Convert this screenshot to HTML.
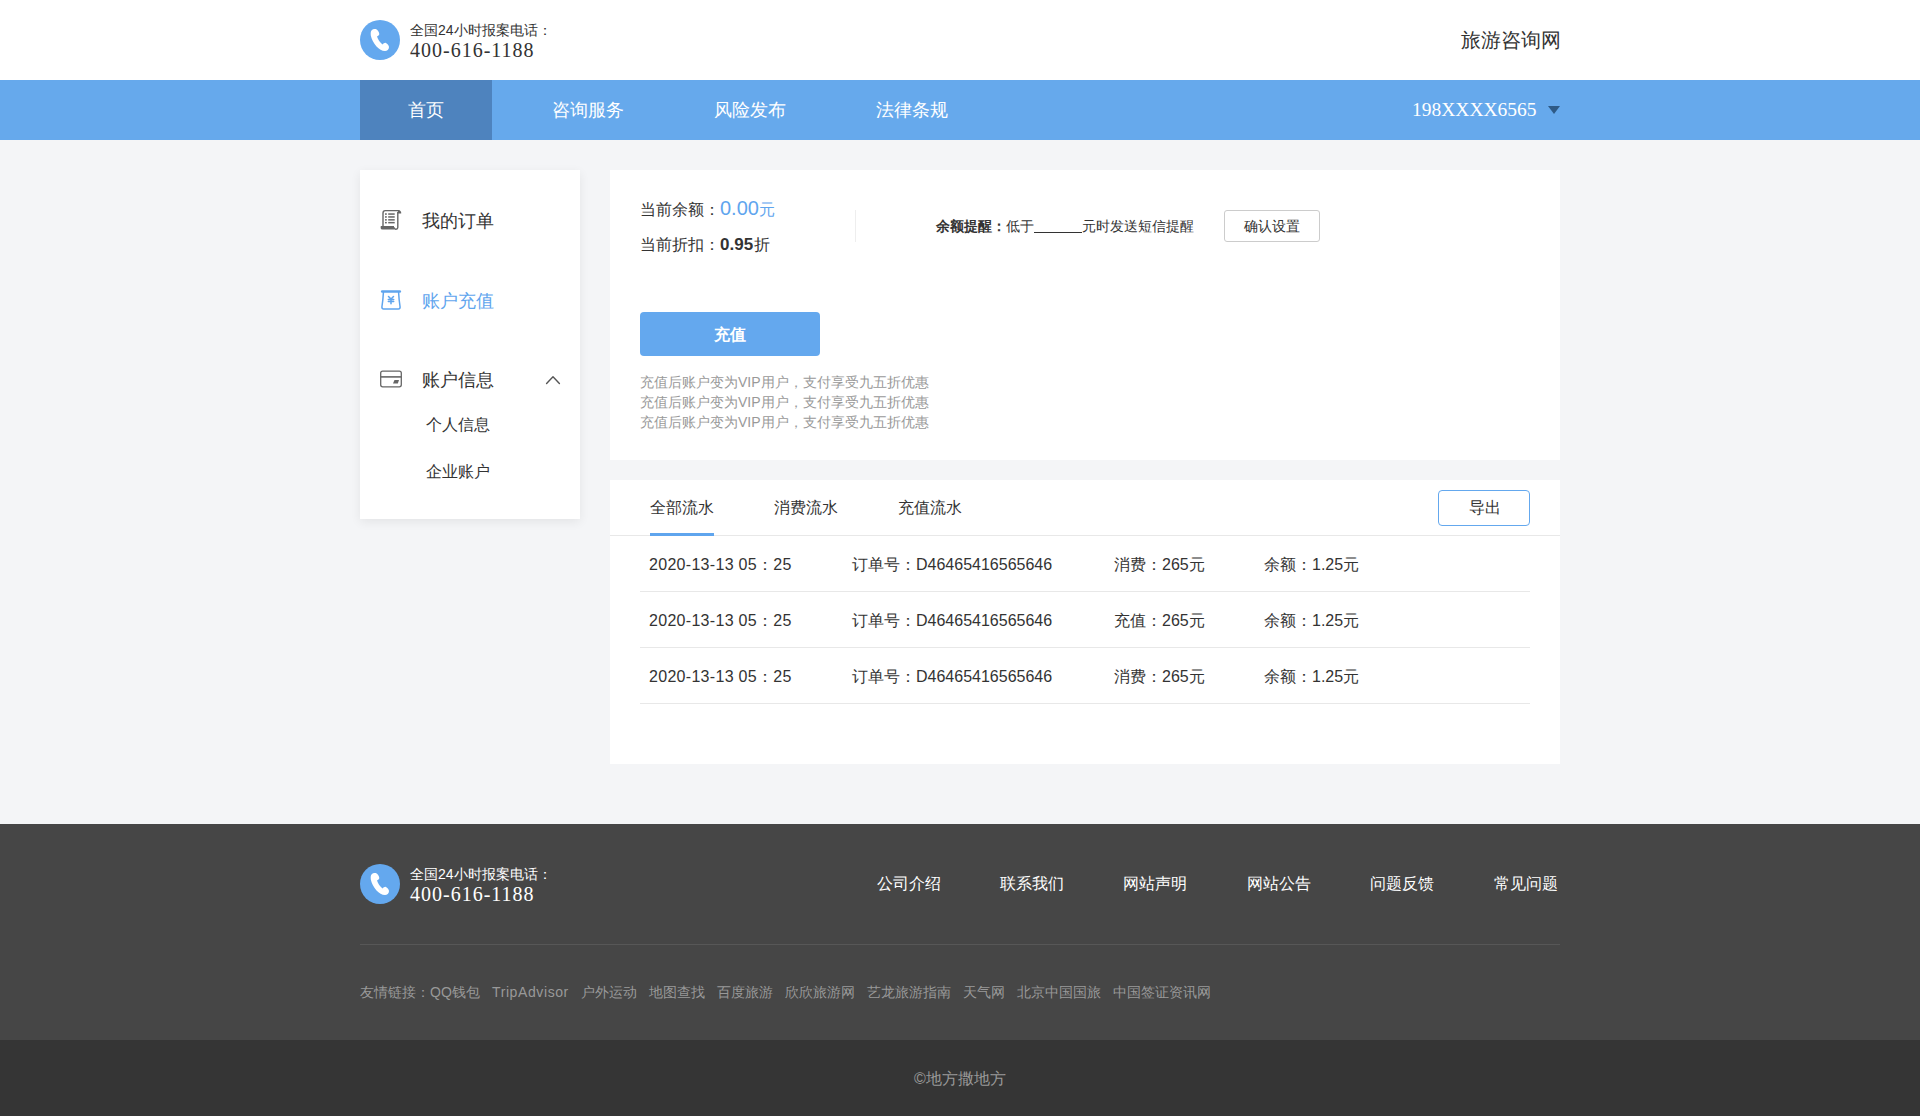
<!DOCTYPE html>
<html><head><meta charset="utf-8">
<style>
*{margin:0;padding:0;box-sizing:border-box}
html,body{width:1920px;height:1116px;overflow:hidden}
body{position:relative;background:#f4f5f7;font-family:"Liberation Sans",sans-serif;color:#333}
.abs{position:absolute;white-space:nowrap}
#hdr{position:absolute;left:0;top:0;width:1920px;height:80px;background:#fff}
#nav{position:absolute;left:0;top:80px;width:1920px;height:60px;background:#66a9ec}
.circle{position:absolute;width:40px;height:40px;border-radius:50%;background:#64a8ee}
.navi{position:absolute;top:80px;height:60px;line-height:60px;font-size:18px;color:#fff}
#side{position:absolute;left:360px;top:170px;width:220px;height:349px;background:#fff;box-shadow:0 3px 10px rgba(0,0,0,.07)}
#p1{position:absolute;left:610px;top:170px;width:950px;height:290px;background:#fff}
#p2{position:absolute;left:610px;top:480px;width:950px;height:284px;background:#fff}
#foot{position:absolute;left:0;top:824px;width:1920px;height:216px;background:#464646}
.row{font-size:16px;line-height:22px;color:#333}
.lk{top:982px;font-size:14px;line-height:20px;color:#999}
#foot2{position:absolute;left:0;top:1040px;width:1920px;height:76px;background:#353535}
</style></head><body>
<div id="hdr"></div>
<div class="circle" style="left:360px;top:20px"><svg width="40" height="40" viewBox="0 0 40 40"><path d="M11.5 10.5C12.5 9.2 14.5 8.8 15.8 9C17.5 9.5 19.2 12 19.3 14C19.3 15 18 16 17 16.5C18 19.5 20 22.5 22.5 24.5C23.5 23.5 24.5 22.7 25.5 22.8C27 23.3 29 25.5 29 27C29 29.5 27 31 25 31C22 31 19 29 16.5 26.5C13.5 23 11.5 19 10.8 15.5C10.5 13 10.8 11.3 11.5 10.5Z" fill="#fff"/></svg></div>
<div class="abs" style="left:410px;top:20px;font-size:14px;line-height:20px;color:#333">全国24小时报案电话：</div>
<div class="abs" style="left:410px;top:38px;font-size:20px;line-height:24px;color:#333;font-family:'Liberation Serif',serif;letter-spacing:1px">400-616-1188</div>
<div class="abs" style="left:1461px;top:26px;font-size:20px;line-height:28px;color:#333">旅游咨询网</div>

<div id="nav"></div>
<div style="position:absolute;left:360px;top:80px;width:132px;height:60px;background:#4e83be"></div>
<div class="navi" style="left:408px">首页</div>
<div class="navi" style="left:552px">咨询服务</div>
<div class="navi" style="left:714px">风险发布</div>
<div class="navi" style="left:876px">法律条规</div>
<div class="navi" style="left:1412px;font-size:19.5px;font-family:'Liberation Serif',serif">198XXXX6565</div>
<svg class="abs" style="left:1548px;top:106px" width="12" height="8" viewBox="0 0 12 8"><path d="M0 0H12L6 8Z" fill="#2e5a86"/></svg>

<div id="side"></div>
<div class="abs" style="left:422px;top:209px;font-size:18px;line-height:24px;color:#333">我的订单</div>
<div class="abs" style="left:422px;top:289px;font-size:18px;line-height:24px;color:#5fa5ee">账户充值</div>
<div class="abs" style="left:422px;top:368px;font-size:18px;line-height:24px;color:#333">账户信息</div>
<div class="abs" style="left:426px;top:414px;font-size:16px;line-height:22px;color:#333">个人信息</div>
<div class="abs" style="left:426px;top:461px;font-size:16px;line-height:22px;color:#333">企业账户</div>

<svg class="abs" style="left:376px;top:206px" width="30" height="28" viewBox="0 0 30 28" fill="none" stroke="#666" stroke-width="1.4">
<path d="M7 20.5V7Q7 4.6 9.3 4.6H23.6"/>
<path d="M21.8 6V21.6Q21.8 23.3 20 23.3Q18.2 23.3 18 21.2"/>
<path d="M21.6 7.6H25.2Q25.4 4.6 23.3 4.4Q21.6 4.4 21.6 6.5Z" fill="#666" stroke="none"/>
<path d="M4.8 20.1H18V23.6H6.6Q4.6 23.6 4.6 21.9Z" fill="#666" stroke="none"/>
<g fill="#666" stroke="none"><rect x="9" y="7.3" width="1.8" height="1.5"/><rect x="9" y="10.2" width="1.8" height="1.5"/><rect x="9" y="13.1" width="1.8" height="1.5"/><rect x="9" y="15.9" width="1.8" height="1.5"/>
<rect x="12.2" y="7.3" width="6.5" height="1.5"/><rect x="12.2" y="10.2" width="6.5" height="1.5"/><rect x="12.2" y="13.1" width="6.5" height="1.5"/><rect x="12.2" y="15.9" width="6.5" height="1.5"/></g>
</svg>
<svg class="abs" style="left:376px;top:286px" width="30" height="28" viewBox="0 0 30 28" fill="none" stroke="#5fa5ee" stroke-width="1.5" stroke-linecap="round" stroke-linejoin="round">
<path d="M6.2 5.5H23.8" stroke-width="2.6"/>
<path d="M7.4 6.5Q7 14 5.9 21Q5.9 23 7.6 23H22.4Q24.1 23 24.1 21Q23 14 22.6 6.5"/>
<path d="M12.5 10.5L15 13L17.5 10.5M12.3 13.6H17.7M12.3 15.6H17.7M15 13V17.8"/>
</svg>
<svg class="abs" style="left:376px;top:365px" width="30" height="28" viewBox="0 0 30 28" fill="none" stroke="#666" stroke-width="1.3">
<rect x="4.7" y="6.1" width="20.6" height="15.7" rx="2"/>
<path d="M4.7 11.9H25.3" stroke-width="1.6"/>
<path d="M18.5 15H23L21.8 18.5H17Z" fill="#666" stroke="none"/>
</svg>
<svg class="abs" style="left:540px;top:370px" width="26" height="20" viewBox="0 0 26 20" fill="none" stroke="#555" stroke-width="1.4" stroke-linecap="round" stroke-linejoin="round"><path d="M6.6 13.4L13 6.7L19.4 13.4"/></svg>
<div id="p1"></div>
<div class="abs" style="left:640px;top:197px;font-size:16px;line-height:22px;color:#333">当前余额：<span style="font-size:20px;color:#5fa5ee">0.00</span><span style="color:#5fa5ee">元</span></div>
<div class="abs" style="left:640px;top:234px;font-size:16px;line-height:22px;color:#333">当前折扣：<b style="font-size:17px">0.95</b><span style="margin-left:1px">折</span></div>
<div style="position:absolute;left:855px;top:210px;width:1px;height:32px;background:#eee"></div>
<div class="abs" style="left:936px;top:216px;font-size:14px;line-height:20px;color:#333"><b>余额提醒：</b>低于<span style="display:inline-block;width:48px;border-bottom:1px solid #333;height:14px;vertical-align:-2px"></span>元时发送短信提醒</div>
<div style="position:absolute;left:1224px;top:210px;width:96px;height:32px;border:1px solid #ccc;border-radius:3px;font-size:14px;line-height:30px;text-align:center;color:#333">确认设置</div>
<div style="position:absolute;left:640px;top:312px;width:180px;height:44px;border-radius:4px;background:#64a8ee;color:#fff;font-size:16px;font-weight:bold;line-height:46px;text-align:center">充值</div>
<div class="abs" style="left:640px;top:372px;font-size:14px;line-height:20px;color:#999">充值后账户变为VIP用户，支付享受九五折优惠<br>充值后账户变为VIP用户，支付享受九五折优惠<br>充值后账户变为VIP用户，支付享受九五折优惠</div>

<div id="p2"></div>
<div style="position:absolute;left:610px;top:535px;width:950px;height:1px;background:#e8e8e8"></div>
<div class="abs" style="left:650px;top:497px;font-size:16px;line-height:22px;color:#333">全部流水</div>
<div style="position:absolute;left:650px;top:533px;width:64px;height:3px;background:#5fa5ee"></div>
<div class="abs" style="left:774px;top:497px;font-size:16px;line-height:22px;color:#333">消费流水</div>
<div class="abs" style="left:898px;top:497px;font-size:16px;line-height:22px;color:#333">充值流水</div>
<div style="position:absolute;left:1438px;top:490px;width:92px;height:36px;border:1px solid #64a8ee;border-radius:4px;font-size:16px;line-height:34px;text-indent:2px;text-align:center;color:#333">导出</div>

<!--rows-->
<div class="abs row" style="left:649px;top:554px;letter-spacing:0.3px">2020-13-13 05：25</div>
<div class="abs row" style="left:852px;top:554px">订单号：D46465416565646</div>
<div class="abs row" style="left:1114px;top:554px">消费：265元</div>
<div class="abs row" style="left:1264px;top:554px">余额：1.25元</div>
<div style="position:absolute;left:640px;top:591px;width:890px;height:1px;background:#e8e8e8"></div>
<div class="abs row" style="left:649px;top:610px;letter-spacing:0.3px">2020-13-13 05：25</div>
<div class="abs row" style="left:852px;top:610px">订单号：D46465416565646</div>
<div class="abs row" style="left:1114px;top:610px">充值：265元</div>
<div class="abs row" style="left:1264px;top:610px">余额：1.25元</div>
<div style="position:absolute;left:640px;top:647px;width:890px;height:1px;background:#e8e8e8"></div>
<div class="abs row" style="left:649px;top:666px;letter-spacing:0.3px">2020-13-13 05：25</div>
<div class="abs row" style="left:852px;top:666px">订单号：D46465416565646</div>
<div class="abs row" style="left:1114px;top:666px">消费：265元</div>
<div class="abs row" style="left:1264px;top:666px">余额：1.25元</div>
<div style="position:absolute;left:640px;top:703px;width:890px;height:1px;background:#e8e8e8"></div>
<div id="foot"></div>
<div id="foot2"></div>
<div class="circle" style="left:360px;top:864px"><svg width="40" height="40" viewBox="0 0 40 40"><path d="M11.5 10.5C12.5 9.2 14.5 8.8 15.8 9C17.5 9.5 19.2 12 19.3 14C19.3 15 18 16 17 16.5C18 19.5 20 22.5 22.5 24.5C23.5 23.5 24.5 22.7 25.5 22.8C27 23.3 29 25.5 29 27C29 29.5 27 31 25 31C22 31 19 29 16.5 26.5C13.5 23 11.5 19 10.8 15.5C10.5 13 10.8 11.3 11.5 10.5Z" fill="#fff"/></svg></div>
<div class="abs" style="left:410px;top:864px;font-size:14px;line-height:20px;color:#fff">全国24小时报案电话：</div>
<div class="abs" style="left:410px;top:882px;font-size:20px;line-height:24px;color:#fff;font-family:'Liberation Serif',serif;letter-spacing:1px">400-616-1188</div>
<div class="abs" style="left:877px;top:873px;font-size:16px;line-height:22px;color:#fff">公司介绍</div>
<div class="abs" style="left:1000px;top:873px;font-size:16px;line-height:22px;color:#fff">联系我们</div>
<div class="abs" style="left:1123px;top:873px;font-size:16px;line-height:22px;color:#fff">网站声明</div>
<div class="abs" style="left:1247px;top:873px;font-size:16px;line-height:22px;color:#fff">网站公告</div>
<div class="abs" style="left:1370px;top:873px;font-size:16px;line-height:22px;color:#fff">问题反馈</div>
<div class="abs" style="left:1494px;top:873px;font-size:16px;line-height:22px;color:#fff">常见问题</div>
<div style="position:absolute;left:360px;top:944px;width:1200px;height:1px;background:#575757"></div>
<div class="abs lk" style="left:360px">友情链接：QQ钱包</div><div class="abs lk" style="left:492px;letter-spacing:0.6px">TripAdvisor</div><div class="abs lk" style="left:581px">户外运动</div><div class="abs lk" style="left:649px">地图查找</div><div class="abs lk" style="left:717px">百度旅游</div><div class="abs lk" style="left:785px">欣欣旅游网</div><div class="abs lk" style="left:867px">艺龙旅游指南</div><div class="abs lk" style="left:963px">天气网</div><div class="abs lk" style="left:1017px">北京中国国旅</div><div class="abs lk" style="left:1113px">中国签证资讯网</div>
<div class="abs" style="left:0;width:1920px;text-align:center;top:1068px;font-size:16px;line-height:22px;color:#999">©地方撒地方</div>
</body></html>
